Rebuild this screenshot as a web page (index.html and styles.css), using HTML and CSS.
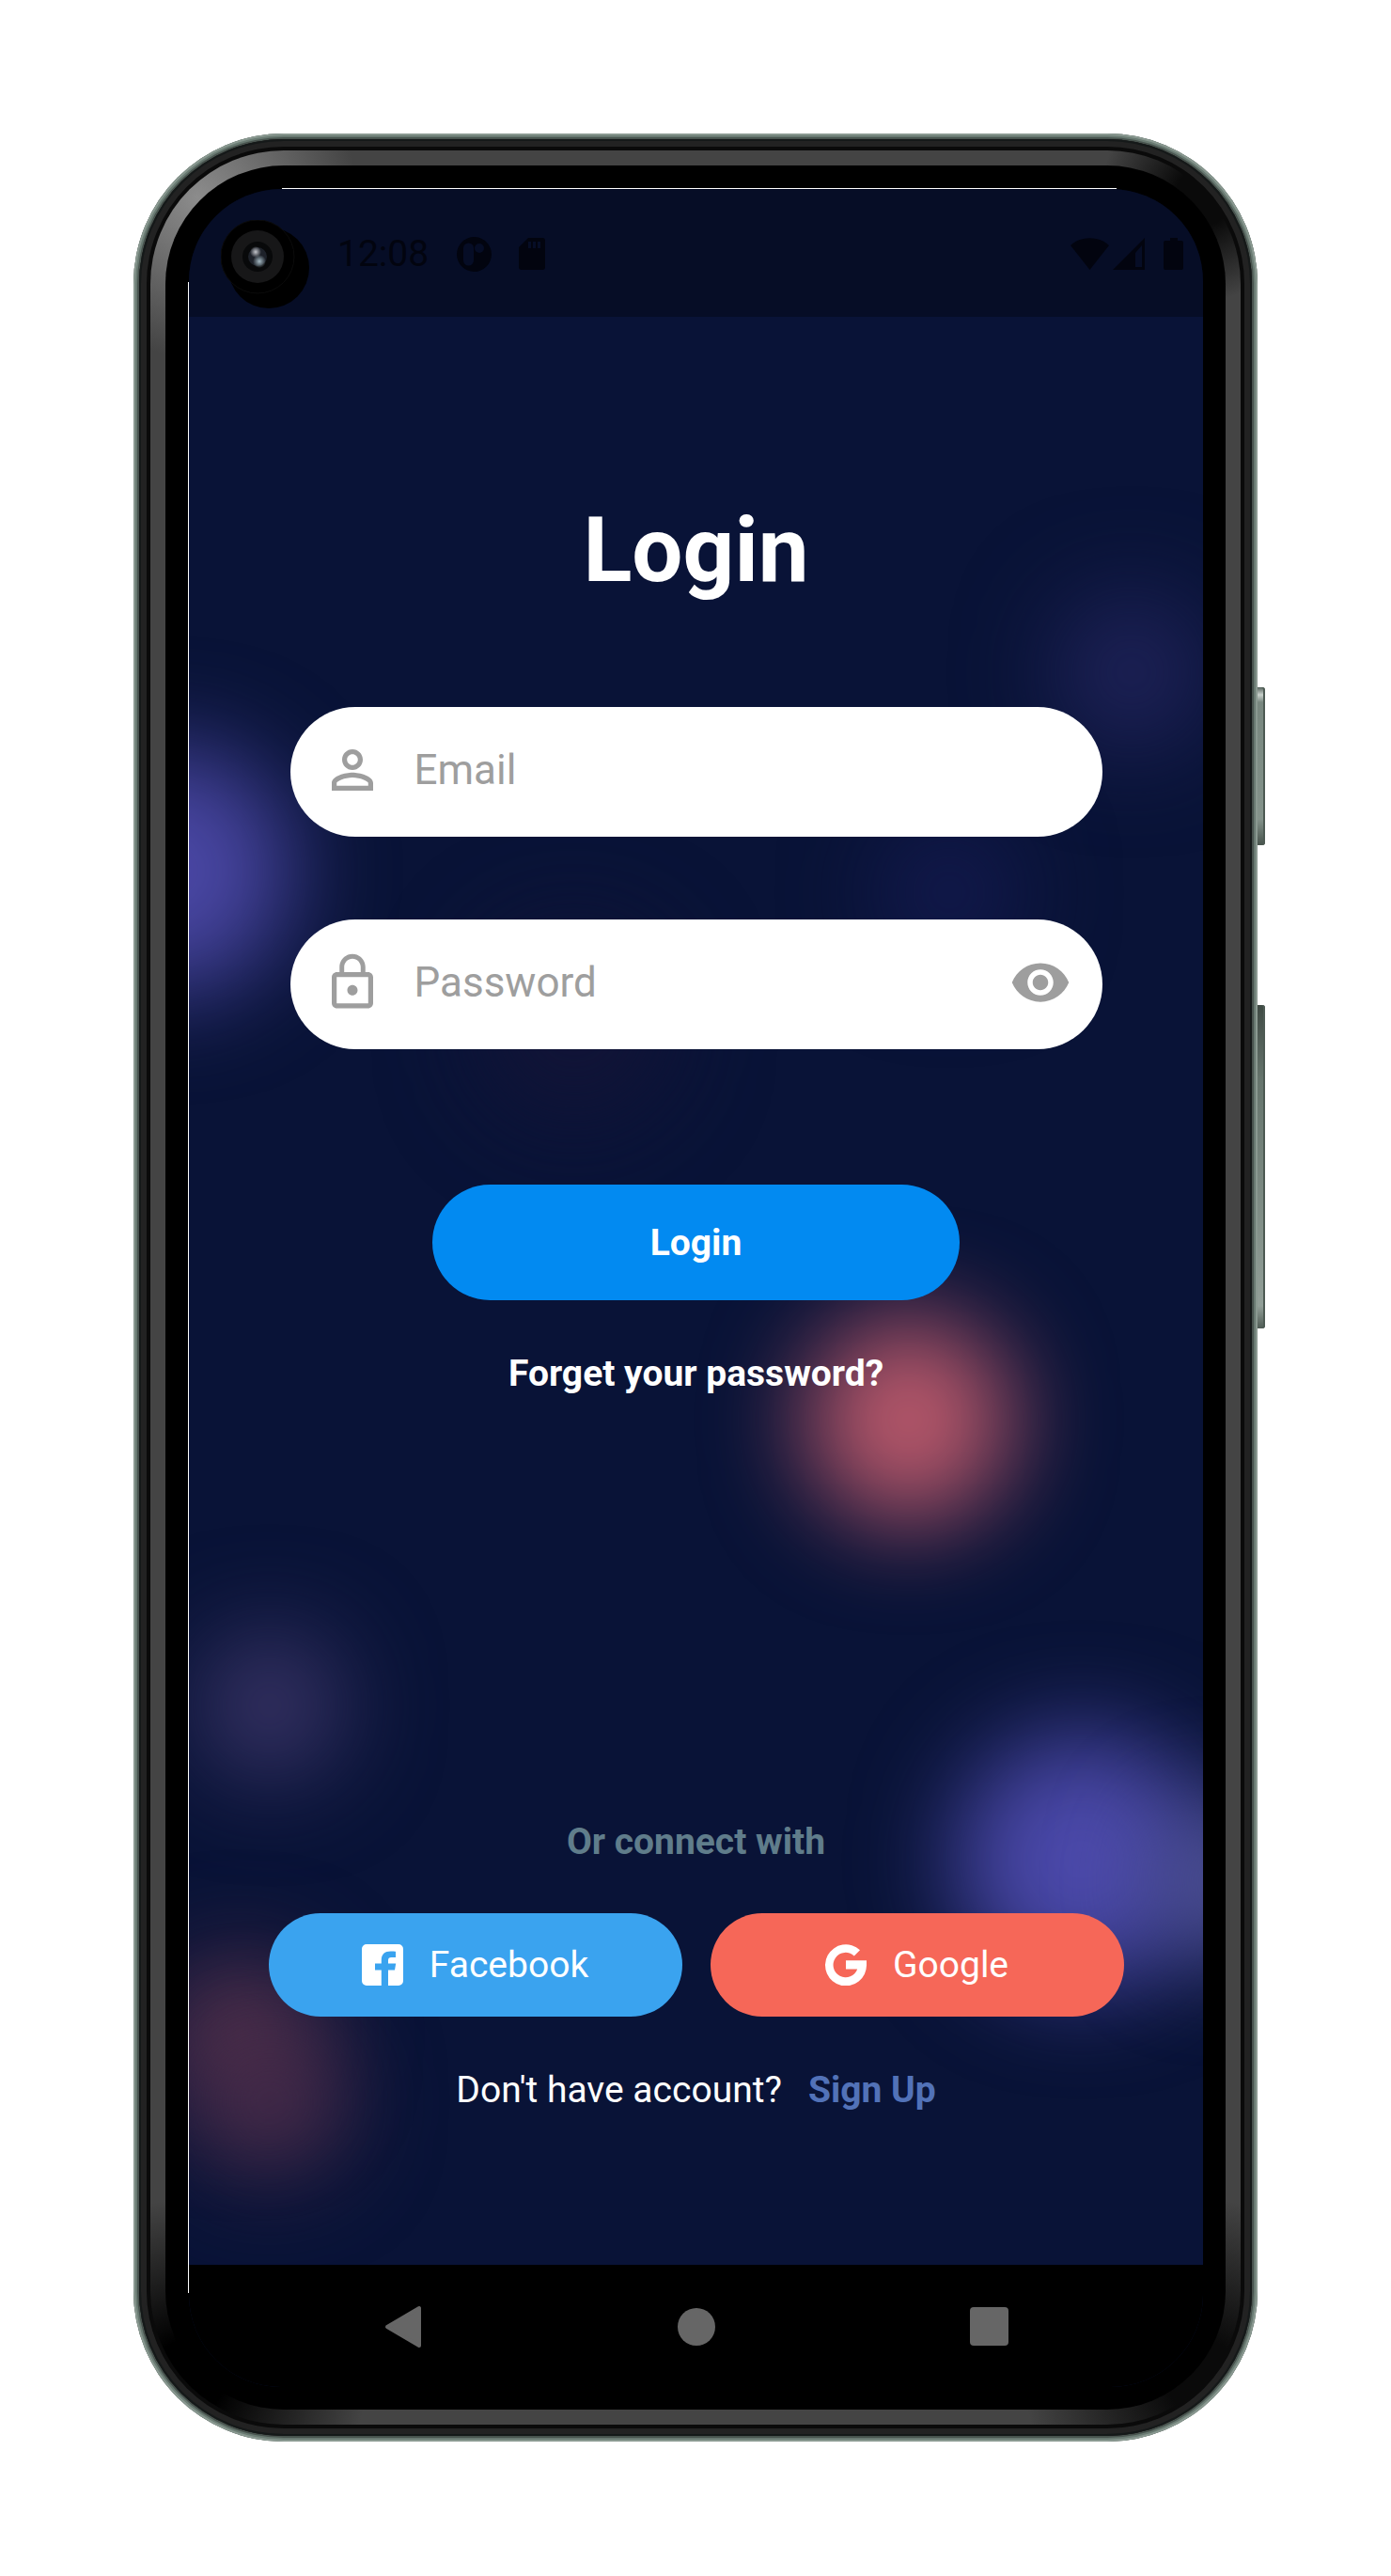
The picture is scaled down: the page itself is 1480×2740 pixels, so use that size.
FILE: index.html
```html
<!DOCTYPE html>
<html lang="en">
<head>
<meta charset="utf-8">
<meta name="viewport" content="width=device-width, initial-scale=1">
<title>Login</title>
<link rel="stylesheet" href="styles.css">
</head>
<body>
<div class="phone">
  <span class="side-key power"></span>
  <span class="side-key volume"></span>
  <div class="rim">
    <div class="bevel">
      <div class="bezel">
        <div class="screen">
          <div class="glow" aria-hidden="true">
            <i class="blob indigo-left"></i>
            <i class="blob indigo-top"></i>
            <i class="blob indigo-mid"></i>
            <i class="blob wine-mid"></i>
            <i class="blob coral"></i>
            <i class="blob violet-left"></i>
            <i class="blob indigo-big"></i>
            <i class="blob slate-edge"></i>
            <i class="blob wine-a"></i>
            <i class="blob wine-b"></i>
          </div>

          <header class="status">
            <span class="clock">12:08</span>
            <svg class="s-app" viewBox="0 0 37 37"><path fill-rule="evenodd" d="M18.500 0a18.500 18.500 0 1 1 0 37a18.500 18.500 0 1 1 0-37zM12.500 6.500a5.500 5.500 0 0 0-5.500 5.500v13a5.500 5.500 0 0 0 11 0V12a5.500 5.500 0 0 0-5.500-5.500zM24 7a5 5 0 1 0 0 10a5 5 0 1 0 0-10z"/></svg>
            <svg class="s-card" viewBox="0 0 28 34"><path fill-rule="evenodd" d="M10 0h15a3 3 0 0 1 3 3v28a3 3 0 0 1-3 3H3a3 3 0 0 1-3-3V10zM10 4v7h3V4zm5 0v7h3V4zm5 0v7h3V4z"/></svg>
            <span class="status-right">
              <svg class="s-wifi" viewBox="0 0 41 34"><path d="M20.500 34L0 8C12-2.500 29-2.500 41 8z"/></svg>
              <svg class="s-signal" viewBox="0 0 34 34"><path fill-rule="evenodd" d="M34 0v34H0zM31 8l-7 8v15h7z"/></svg>
              <svg class="s-battery" viewBox="0 0 21 34"><path d="M7 0h8v3h4a2 2 0 0 1 2 2v27a2 2 0 0 1-2 2H2a2 2 0 0 1-2-2V5a2 2 0 0 1 2-2h5z"/></svg>
            </span>
          </header>

          <main class="app">
            <h1>Login</h1>
            <form class="login">
              <div class="field">
                <label for="email" aria-label="Email"><svg class="icon" viewBox="0 0 24 24"><path d="M12 5.900c1.160 0 2.100.94 2.100 2.100s-.94 2.100-2.100 2.100S9.900 9.160 9.900 8s.94-2.100 2.100-2.100m0 9c2.970 0 6.100 1.460 6.100 2.100v1.100H5.900V17c0-.64 3.130-2.100 6.100-2.100M12 4C9.790 4 8 5.790 8 8s1.790 4 4 4 4-1.790 4-4-1.790-4-4-4zm0 9c-2.670 0-8 1.340-8 4v3h16v-3c0-2.660-5.330-4-8-4z"/></svg></label>
                <input id="email" type="email" placeholder="Email">
              </div>
              <div class="field">
                <label for="password" aria-label="Password"><svg class="icon" viewBox="0 0 24 24"><path d="M12 17c1.100 0 2-.9 2-2s-.9-2-2-2-2 .9-2 2 .9 2 2 2zm6-9h-1V6c0-2.760-2.240-5-5-5S7 3.240 7 6v2H6c-1.100 0-2 .9-2 2v10c0 1.100.9 2 2 2h12c1.100 0 2-.9 2-2V10c0-1.100-.9-2-2-2zM8.800 6c0-1.760 1.440-3.200 3.200-3.200s3.200 1.440 3.200 3.200v2H8.800V6zM18.100 20.100H5.900V9.900h12.200z"/></svg></label>
                <input id="password" type="password" placeholder="Password">
                <button class="reveal" type="button" aria-label="Show password"><svg class="icon" viewBox="0 0 24 24"><path d="M12 4.500C7 4.500 2.730 7.610 1 12c1.730 4.390 6 7.500 11 7.500s9.270-3.110 11-7.500c-1.730-4.390-6-7.500-11-7.500zM12 17c-2.760 0-5-2.240-5-5s2.240-5 5-5 5 2.240 5 5-2.240 5-5 5zm0-8c-1.660 0-3 1.340-3 3s1.340 3 3 3 3-1.340 3-3-1.340-3-3-3z"/></svg></button>
              </div>
              <button class="submit" type="submit">Login</button>
            </form>
            <a class="forgot" href="#">Forget your password?</a>

            <p class="connect">Or connect with</p>
            <div class="social">
              <button class="facebook" type="button">
                <svg viewBox="0 0 22 22"><path fill-rule="evenodd" d="M2.500 0h17A2.500 2.500 0 0 1 22 2.500v17a2.500 2.500 0 0 1-2.500 2.500H14v-8.300h3.500l.6-3.400H14V8.600c0-1 .5-1.600 1.700-1.600H18V3.900c-.5-.1-1.400-.2-2.600-.2-3.200 0-5 1.600-5 4.700v1.900H7v3.400h3.400V22H2.500A2.500 2.500 0 0 1 0 19.500v-17A2.500 2.500 0 0 1 2.500 0z"/></svg>
                Facebook
              </button>
              <button class="google" type="button">
                <svg viewBox="0 0 22 22"><path d="M18.500 3.100A11 11 0 1 0 22 11V8.600H11v4.600h6.100A6.600 6.600 0 1 1 15.400 6.200z"/></svg>
                Google
              </button>
            </div>
            <p class="signup">Don't have account? <a href="#">Sign Up</a></p>
          </main>

          <nav class="nav" aria-label="System">
            <button type="button" aria-label="Back"><svg viewBox="0 0 46 46"><path d="M41 3v40L7 23z"/></svg></button>
            <button type="button" aria-label="Home"><svg viewBox="0 0 46 46"><circle cx="23" cy="23" r="20"/></svg></button>
            <button type="button" aria-label="Recents"><svg viewBox="0 0 46 46"><rect x="2" y="2" width="41" height="41" rx="4"/></svg></button>
          </nav>
        </div>
        <svg class="camera" viewBox="0 0 94 94" aria-hidden="true">
          <defs>
            <radialGradient id="glintA"><stop offset="0" stop-color="#c4c6cc"/><stop offset="1" stop-color="#c4c6cc" stop-opacity="0"/></radialGradient>
            <radialGradient id="glintB"><stop offset="0" stop-color="#a5bac4"/><stop offset="1" stop-color="#a5bac4" stop-opacity="0"/></radialGradient>
          </defs>
          <circle cx="51" cy="51" r="43"/>
          <circle cx="39" cy="39" r="39" stroke="#0b0b0b" stroke-width="1"/>
          <circle cx="39" cy="39" r="28" fill="#171718"/>
          <circle cx="39" cy="39" r="16" fill="#08090a"/>
          <circle cx="39" cy="39" r="10" fill="#1d2129"/>
          <circle cx="37" cy="34" r="6" fill="url(#glintA)"/>
          <circle cx="41" cy="44" r="7" fill="url(#glintB)"/>
        </svg>
      </div>
    </div>
  </div>
</div>
</body>
</html>
```
FILE: styles.css
```css
* { box-sizing: border-box; }

body {
  margin: 0;
  padding: 142px;
  background: #fff;
  font-family: Roboto, "Liberation Sans", sans-serif;
  font-size: 39px;
  line-height: 44px;
  color: #fff;
}

h1, p { margin: 0; }
a { text-decoration: none; }
button { border: 0; padding: 0; font: inherit; color: inherit; cursor: pointer; }
svg { display: block; flex: none; }

/* Device shell */
.phone {
  position: relative;
  padding: 6px;
  border-radius: 160px;
  background: #48534e;
  box-shadow: inset 0 0 0 2px #8a9991, inset 0 0 0 4px #697a72;
}

.rim {
  padding: 12px;
  border-radius: 154px;
  background: #0a0a0a;
  box-shadow: inset 0 0 0 2px #151919, inset 0 0 0 8px #222;
}

.bevel {
  padding: 16px;
  border-radius: 142px;
  background:
    radial-gradient(circle at 50px 50px, #8c8c8c, transparent 170px),
    radial-gradient(circle at calc(100% - 40px) 50px, #0a0a0a 30px, transparent 110px),
    radial-gradient(circle at 40px calc(100% - 50px), #000 40px, transparent 190px),
    radial-gradient(circle at calc(100% - 40px) calc(100% - 50px), #0a0a0a 40px, transparent 190px),
    #444;
}

.bezel {
  position: relative;
  padding: 25px 24px 24px 25px;
  border-radius: 126px;
  background: #000;
}

.bezel::before, .bezel::after {
  content: "";
  position: absolute;
  background: #fff;
}
.bezel::before { top: 24px; left: 124px; right: 116px; height: 1px; }
.bezel::after { top: 124px; left: 24px; bottom: 124px; width: 1px; }

.side-key {
  position: absolute;
  left: 100%;
  width: 8px;
  border-radius: 0 3px 3px 0;
  box-shadow: inset -2px 0 0 #4d5a53;
}
.power { top: 589px; height: 168px; background: linear-gradient(#56635d, #c9d1cc 8px, #78877f 16px, #84938b 140px, #47534c); }
.volume { top: 927px; height: 344px; background: linear-gradient(#3f4a44, #66756d 80px, #929f98 320px, #4f5c55); }

.camera { position: absolute; top: 58px; left: 59px; width: 94px; height: 94px; }

/* Screen */
.screen {
  position: relative;
  overflow: hidden;
  border-radius: 98px;
  background: #091337;
}

.glow { position: absolute; inset: 0; }
.blob {
  position: absolute;
  border-radius: 50%;
  transform: translate(-50%, -50%);
  width: 200px;
  height: 200px;
  filter: blur(52px);
}
.indigo-left { left: -2%; top: 31%; width: 260px; height: 260px; background: #4a47a4; }
.indigo-top { left: 93%; top: 22%; width: 160px; height: 160px; background: #20235a; }
.indigo-mid { left: 75%; top: 32%; width: 140px; height: 140px; background: #141a50; }
.wine-mid { left: 38%; top: 38%; background: #121437; }
.coral { left: 71%; top: 56%; width: 220px; height: 220px; background: #b8586a; }
.violet-left { left: 8%; top: 69%; width: 150px; height: 150px; background: #3c3669; }
.indigo-big { left: 88%; top: 76%; width: 270px; height: 270px; background: #4b49aa; }
.slate-edge { left: 102%; top: 77%; width: 160px; height: 160px; background: #52559a; }
.wine-a { left: 5%; top: 84%; width: 160px; height: 160px; background: #56324c; }
.wine-b { left: 8%; top: 87%; width: 150px; height: 150px; background: #4a2c4a; }

.status {
  position: relative;
  display: flex;
  align-items: center;
  height: 136px;
  padding: 2px 21px 0 158px;
  background: rgba(0, 0, 0, .3);
  color: #02040f;
  fill: #02040f;
}
.s-app { width: 37px; margin-left: 30px; }
.s-card { width: 28px; margin-left: 29px; }
.status-right { display: flex; margin-left: auto; }
.s-wifi { width: 41px; }
.s-signal { width: 34px; margin-left: 4px; }
.s-battery { width: 21px; margin-left: 20px; }

.app {
  position: relative;
  display: flex;
  flex-direction: column;
  align-items: center;
  padding: 192px 7% 164px;
}

h1 { font-size: 96px; line-height: 112px; font-weight: 700; }

.login {
  display: flex;
  flex-direction: column;
  align-items: center;
  gap: 88px;
  width: 100%;
  max-width: 864px;
  margin-top: 111px;
}

.field {
  display: flex;
  align-items: center;
  width: 100%;
  height: 138px;
  padding: 0 33px 4px;
  border-radius: 69px;
  background: #fff;
}
.icon { width: 66px; height: 66px; fill: #9e9e9e; }
.field input {
  flex: 1;
  min-width: 0;
  margin-left: 33px;
  padding: 0;
  border: 0;
  outline: 0;
  background: none;
  font: inherit;
  font-size: 44px;
  line-height: 52px;
  color: #222;
}
.field input::placeholder { color: #9e9e9e; opacity: 1; }
.reveal { background: none; }

.submit {
  width: 65%;
  height: 123px;
  margin-top: 56px;
  border-radius: 62px;
  background: #028af1;
  font-weight: 700;
}

.forgot { margin-top: 56px; font-weight: 700; color: #fff; }
.connect { margin-top: 454px; font-weight: 700; color: #607d8b; }

.social { display: flex; gap: 30px; width: 100%; max-width: 910px; margin-top: 54px; }
.social button {
  flex: 1;
  display: flex;
  align-items: center;
  justify-content: center;
  gap: 28px;
  height: 110px;
  border-radius: 55px;
}
.social svg { width: 44px; height: 44px; fill: #fff; }
.facebook { background: #3aa3ef; }
.google { background: #f66758; }

.signup { display: flex; gap: 28px; margin-top: 56px; }
.signup a { font-weight: 700; color: #5272b8; }

.nav {
  position: relative;
  display: flex;
  justify-content: space-between;
  align-items: center;
  height: 130px;
  padding: 2px 204px 0;
  background: #000;
}
.nav button { background: none; }
.nav svg { width: 46px; height: 46px; fill: #666; }
.nav path { stroke: #666; stroke-width: 4px; stroke-linejoin: round; }
```
